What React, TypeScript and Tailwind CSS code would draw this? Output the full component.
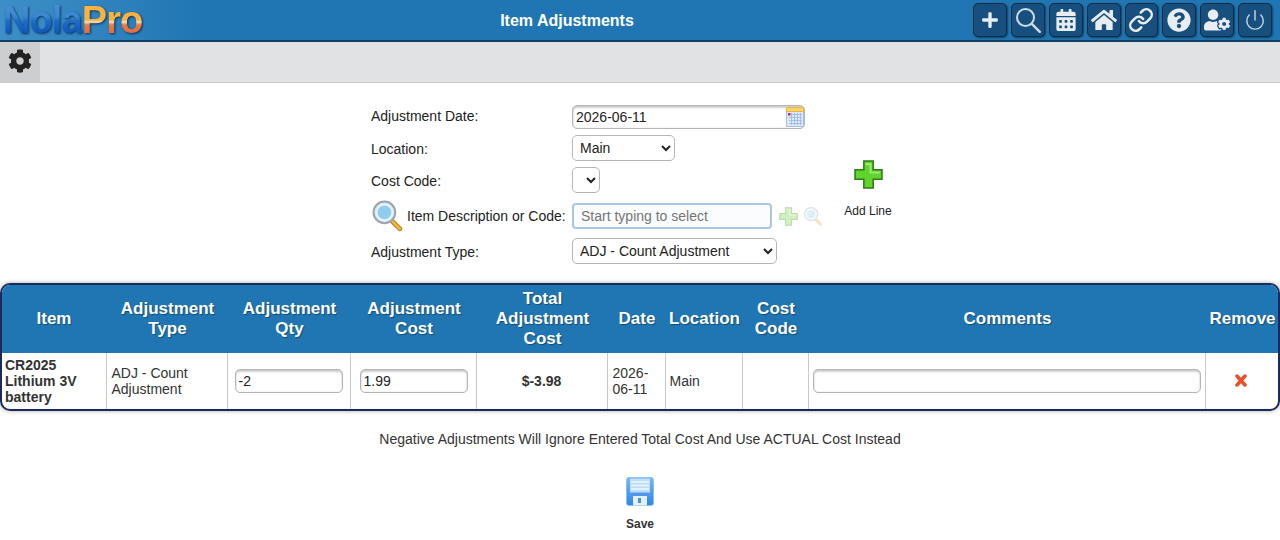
import React from 'react';
import { FaPlus, FaCalendarAlt, FaHome, FaQuestionCircle, FaUserCog, FaCog } from 'react-icons/fa';
import { Link, Power } from 'lucide-react';

function GreenPlus({ size, faded }: { size: number; faded?: boolean }) {
  return (
    <svg width={size} height={size} viewBox="0 0 28 28" className={faded ? 'opacity-30' : ''}>
      <path d="M9.500 1h9v8.500H27v9h-8.500V27h-9v-8.500H1v-9h8.500z" fill="#62d32e" stroke="#2c7d16" strokeWidth="1.500" />
      <path d="M11 3h6v8h8v2H15V5h-4z" fill="#9be96d" />
    </svg>
  );
}

function Magnifier({ size, faded }: { size: number; faded?: boolean }) {
  return (
    <svg width={size} height={size} viewBox="0 0 32 32" className={faded ? 'opacity-30' : ''}>
      <path d="M19 20l9 9" stroke="#b9791a" strokeWidth="4.500" strokeLinecap="round" />
      <path d="M19.500 20.500l8.500 8.500" stroke="#f4b73f" strokeWidth="2.500" strokeLinecap="round" />
      <circle cx="13" cy="13" r="10.500" fill="#dbeef9" stroke="#9aa5ae" strokeWidth="2" />
      <circle cx="13" cy="13" r="7.500" fill="#8fcdf0" stroke="#eef4f8" strokeWidth="1.500" />
    </svg>
  );
}

function MiniCalendar() {
  return (
    <svg width="18" height="20" viewBox="0 0 18 20">
      <rect x="0.500" y="0.500" width="17" height="19" fill="#dbe8f8" stroke="#a9c0dc" />
      <rect x="0.500" y="0.500" width="17" height="4" fill="#f8d566" stroke="#e3b948" />
      <path d="M3 7.500h13M3 10.500h13M3 13.500h13M3 16.500h13M5.500 6v12M8.500 6v12M11.500 6v12M14.500 6v12" stroke="#9db8dc" strokeWidth="0.800" />
      <rect x="2" y="6" width="2.500" height="2.500" fill="#c8324a" />
    </svg>
  );
}

function SaveDisk() {
  return (
    <svg width="28" height="29" viewBox="0 0 28 29">
      <defs>
        <linearGradient id="disk" x1="0" y1="0" x2="0" y2="1">
          <stop offset="0" stopColor="#7ab8f2" />
          <stop offset="1" stopColor="#2f83e6" />
        </linearGradient>
      </defs>
      <rect x="0.500" y="0.500" width="27" height="28" rx="2.500" fill="url(#disk)" stroke="#8cc0f2" />
      <rect x="4" y="1.500" width="20" height="14" fill="#bcdcf8" />
      <path d="M5 5h18M5 8.500h18M5 12h18" stroke="#eef7fe" strokeWidth="1.500" />
      <rect x="7" y="19" width="14" height="9.500" fill="#e2f1fc" />
      <rect x="12" y="21" width="3" height="5" fill="#4f8fd8" />
    </svg>
  );
}

function TopButton({ children }: { children: React.ReactNode }) {
  return (
    <button className="w-[33.86px] h-[34px] flex items-center justify-center rounded-[5px] bg-[#17507f] border border-[#0c2c48] shadow-[1px_1px_2px_rgba(0,0,0,0.45)] text-[#e8edf1]">
      {children}
    </button>
  );
}

const thBase = 'bg-[#1f76b3] text-white font-bold text-[17px] leading-[20px] text-center align-middle [text-shadow:1px_1px_1px_rgba(0,0,0,0.35)]';
const thClass = `${thBase} pl-[2px]`;
const tdClass = 'border-r border-[#c9c9c9] text-[14px] leading-[16px] text-[#333] align-middle pl-[4px] pr-[4px]';
const fieldClass = 'h-[24px] rounded-[5px] border border-[#b5b5b5] bg-white text-[14px] text-[#222] shadow-[inset_0_2px_2px_rgba(0,0,0,0.18),inset_0_0_2px_rgba(0,0,0,0.12)]';
const selectClass = 'h-[26px] rounded-[5px] border border-[#b5b5b5] bg-white text-[14px] text-[#222] pl-[3px]';

function Label({ children }: { children: React.ReactNode }) {
  return <span className="text-[14px] leading-[16px] text-[#222]">{children}</span>;
}

export default function App() {
  return (
    <div className="w-[1280px] h-[540px] overflow-hidden bg-white font-['Liberation_Sans',Arial,sans-serif]">
      {/* top bar */}
      <header className="h-[42px] flex items-center bg-gradient-to-r from-[#3e8fc7] to-[#1f76b3] to-[16%] border-b-2 border-[#123f63] pr-[8px]">
        <div className="w-[200px] h-[40px] pl-[3px] text-[38px] leading-[40px] font-bold tracking-[-0.9px] drop-shadow-[1px_1px_1px_rgba(0,30,70,0.8)]">
          <span className="inline-block bg-[linear-gradient(180deg,#4b93d6_0%,#3b86d0_42%,#1f6cc8_52%,#145cbc_75%,#0f4ea6_100%)] bg-clip-text text-transparent">Nola</span>
          <span className="inline-block bg-[linear-gradient(180deg,#fbb23a_0%,#f9b23f_50%,#f8e0b8_55%,#ec7a3c_62%,#e0603a_100%)] bg-clip-text text-transparent">Pro</span>
        </div>
        <div className="w-[734px] mt-[1px] text-center text-white font-bold text-[16px]">Item Adjustments</div>
        <div className="ml-auto flex gap-[4px]">
          <TopButton><FaPlus size={18} /></TopButton>
          <TopButton>
            <svg width="28" height="28" viewBox="0 0 28 28" fill="none" stroke="#cfdbe5" strokeLinecap="round">
              <circle cx="11.500" cy="11.500" r="8.500" strokeWidth="2" />
              <path d="M17.800 17.800l8 8" strokeWidth="2.400" />
            </svg>
          </TopButton>
          <TopButton><FaCalendarAlt size={22} /></TopButton>
          <TopButton><FaHome size={26} /></TopButton>
          <TopButton><Link size={26} strokeWidth={2.3} /></TopButton>
          <TopButton><FaQuestionCircle size={24} /></TopButton>
          <TopButton><FaUserCog size={26} /></TopButton>
          <TopButton><Power size={22} strokeWidth={1.6} className="text-[#c5d4e0]" /></TopButton>
        </div>
      </header>

      {/* toolbar */}
      <div className="h-[41px] bg-[#e1e2e4] border-b border-[#c8c8c8]">
        <div className="w-[40px] h-[40px] bg-[#cdcecf] flex items-center justify-center text-[#222]">
          <FaCog size={24} className="-mt-[2px]" />
        </div>
      </div>

      {/* form */}
      <div className="flex justify-center pt-[22px]">
        <div className="w-[538px] flex">
          <div className="w-[456px] flex flex-col">
            <div className="h-[24px] flex items-center">
              <div className="w-[201px] -mt-[2px]"><Label>Adjustment Date:</Label></div>
              <div className={`${fieldClass} w-[233px] flex items-center justify-between pl-[3px]`}>
                <span>2026-06-11</span>
                <MiniCalendar />
              </div>
            </div>
            <div className="h-[26px] mt-[6px] flex items-center">
              <div className="w-[201px] mt-[2px]"><Label>Location:</Label></div>
              <select className={`${selectClass} w-[103px]`} defaultValue="Main">
                <option>Main</option>
              </select>
            </div>
            <div className="h-[26px] mt-[6px] flex items-center">
              <div className="w-[201px] mt-[2px]"><Label>Cost Code:</Label></div>
              <select className={`${selectClass} w-[28px]`} />
            </div>
            <div className="h-[26px] mt-[10px] flex items-center">
              <div className="w-[201px] flex items-center">
                <div className="mr-[3px] -mt-[2px]"><Magnifier size={33} /></div>
                <Label>Item Description or Code:</Label>
              </div>
              <input
                placeholder="Start typing to select"
                className="w-[200px] h-[26px] rounded-[4px] border-2 border-[#a9c8e0] bg-[#fbfcfd] pl-[7px] text-[14px] placeholder:text-[#757575] outline-none"
              />
              <div className="ml-[7px] flex items-center gap-[5px]">
                <GreenPlus size={19} faded />
                <Magnifier size={20} faded />
              </div>
            </div>
            <div className="h-[26px] mt-[9px] flex items-center">
              <div className="w-[201px] mt-[2px]"><Label>Adjustment Type:</Label></div>
              <select className={`${selectClass} w-[205px]`} defaultValue="ADJ - Count Adjustment">
                <option>ADJ - Count Adjustment</option>
              </select>
            </div>
          </div>
          <div className="w-[82px] flex flex-col items-center pt-[55px]">
            <GreenPlus size={29} />
            <span className="mt-[15px] text-[12px] leading-[14px] text-[#222]">Add Line</span>
          </div>
        </div>
      </div>

      {/* lines table */}
      <div className="mt-[19px] rounded-[10px] border-2 border-[#1a2a5c] overflow-hidden shadow-[0_0_4px_rgba(0,0,0,0.35)]">
        <table className="w-full table-fixed border-collapse">
          <thead>
            <tr className="h-[68px]">
              <th className={`${thBase} w-[104px]`}>Item</th>
              <th className={`${thClass} w-[121px]`}>Adjustment<br />Type</th>
              <th className={`${thClass} w-[123px]`}>Adjustment<br />Qty</th>
              <th className={`${thClass} w-[126px]`}>Adjustment<br />Cost</th>
              <th className={`${thClass} w-[131px]`}>Total<br />Adjustment<br />Cost</th>
              <th className={`${thClass} w-[58px]`}>Date</th>
              <th className={`${thClass} w-[77px]`}>Location</th>
              <th className={`${thClass} w-[66px]`}>Cost<br />Code</th>
              <th className={`${thClass} w-[397px]`}>Comments</th>
              <th className={thClass}>Remove</th>
            </tr>
          </thead>
          <tbody>
            <tr className="h-[56px]">
              <td className={`${tdClass} font-bold !pl-[3px]`}>CR2025 Lithium 3V battery</td>
              <td className={`${tdClass} !pl-[5px]`}>ADJ - Count Adjustment</td>
              <td className={`${tdClass} !px-[7px]`}>
                <input defaultValue="-2" className={`${fieldClass} w-full pl-[3px] block`} />
              </td>
              <td className={`${tdClass} !pl-[9px] !pr-[8px]`}>
                <input defaultValue="1.99" className={`${fieldClass} w-full pl-[3px] block`} />
              </td>
              <td className={`${tdClass} font-bold text-center text-[13px]`}>$-3.98</td>
              <td className={`${tdClass} !pl-[5px]`}>2026-06-11</td>
              <td className={tdClass}>Main</td>
              <td className={tdClass}></td>
              <td className={tdClass}>
                <input className={`${fieldClass} w-full block`} />
              </td>
              <td className="align-middle text-center pr-[2px]">
                <svg width="14" height="13" viewBox="0 0 14 13" className="inline-block -mt-[3px]">
                  <path d="M3 2l8 9M11 2l-8 9" stroke="#e8502a" strokeWidth="3.500" strokeLinecap="round" />
                </svg>
              </td>
            </tr>
          </tbody>
        </table>
      </div>

      <p className="mt-[20px] text-center text-[14px] leading-[16px] text-[#333]">
        Negative Adjustments Will Ignore Entered Total Cost And Use ACTUAL Cost Instead
      </p>

      <div className="mt-[30px] flex flex-col items-center">
        <SaveDisk />
        <span className="mt-[11px] text-[12px] leading-[14px] font-bold text-[#333]">Save</span>
      </div>
    </div>
  );
}
